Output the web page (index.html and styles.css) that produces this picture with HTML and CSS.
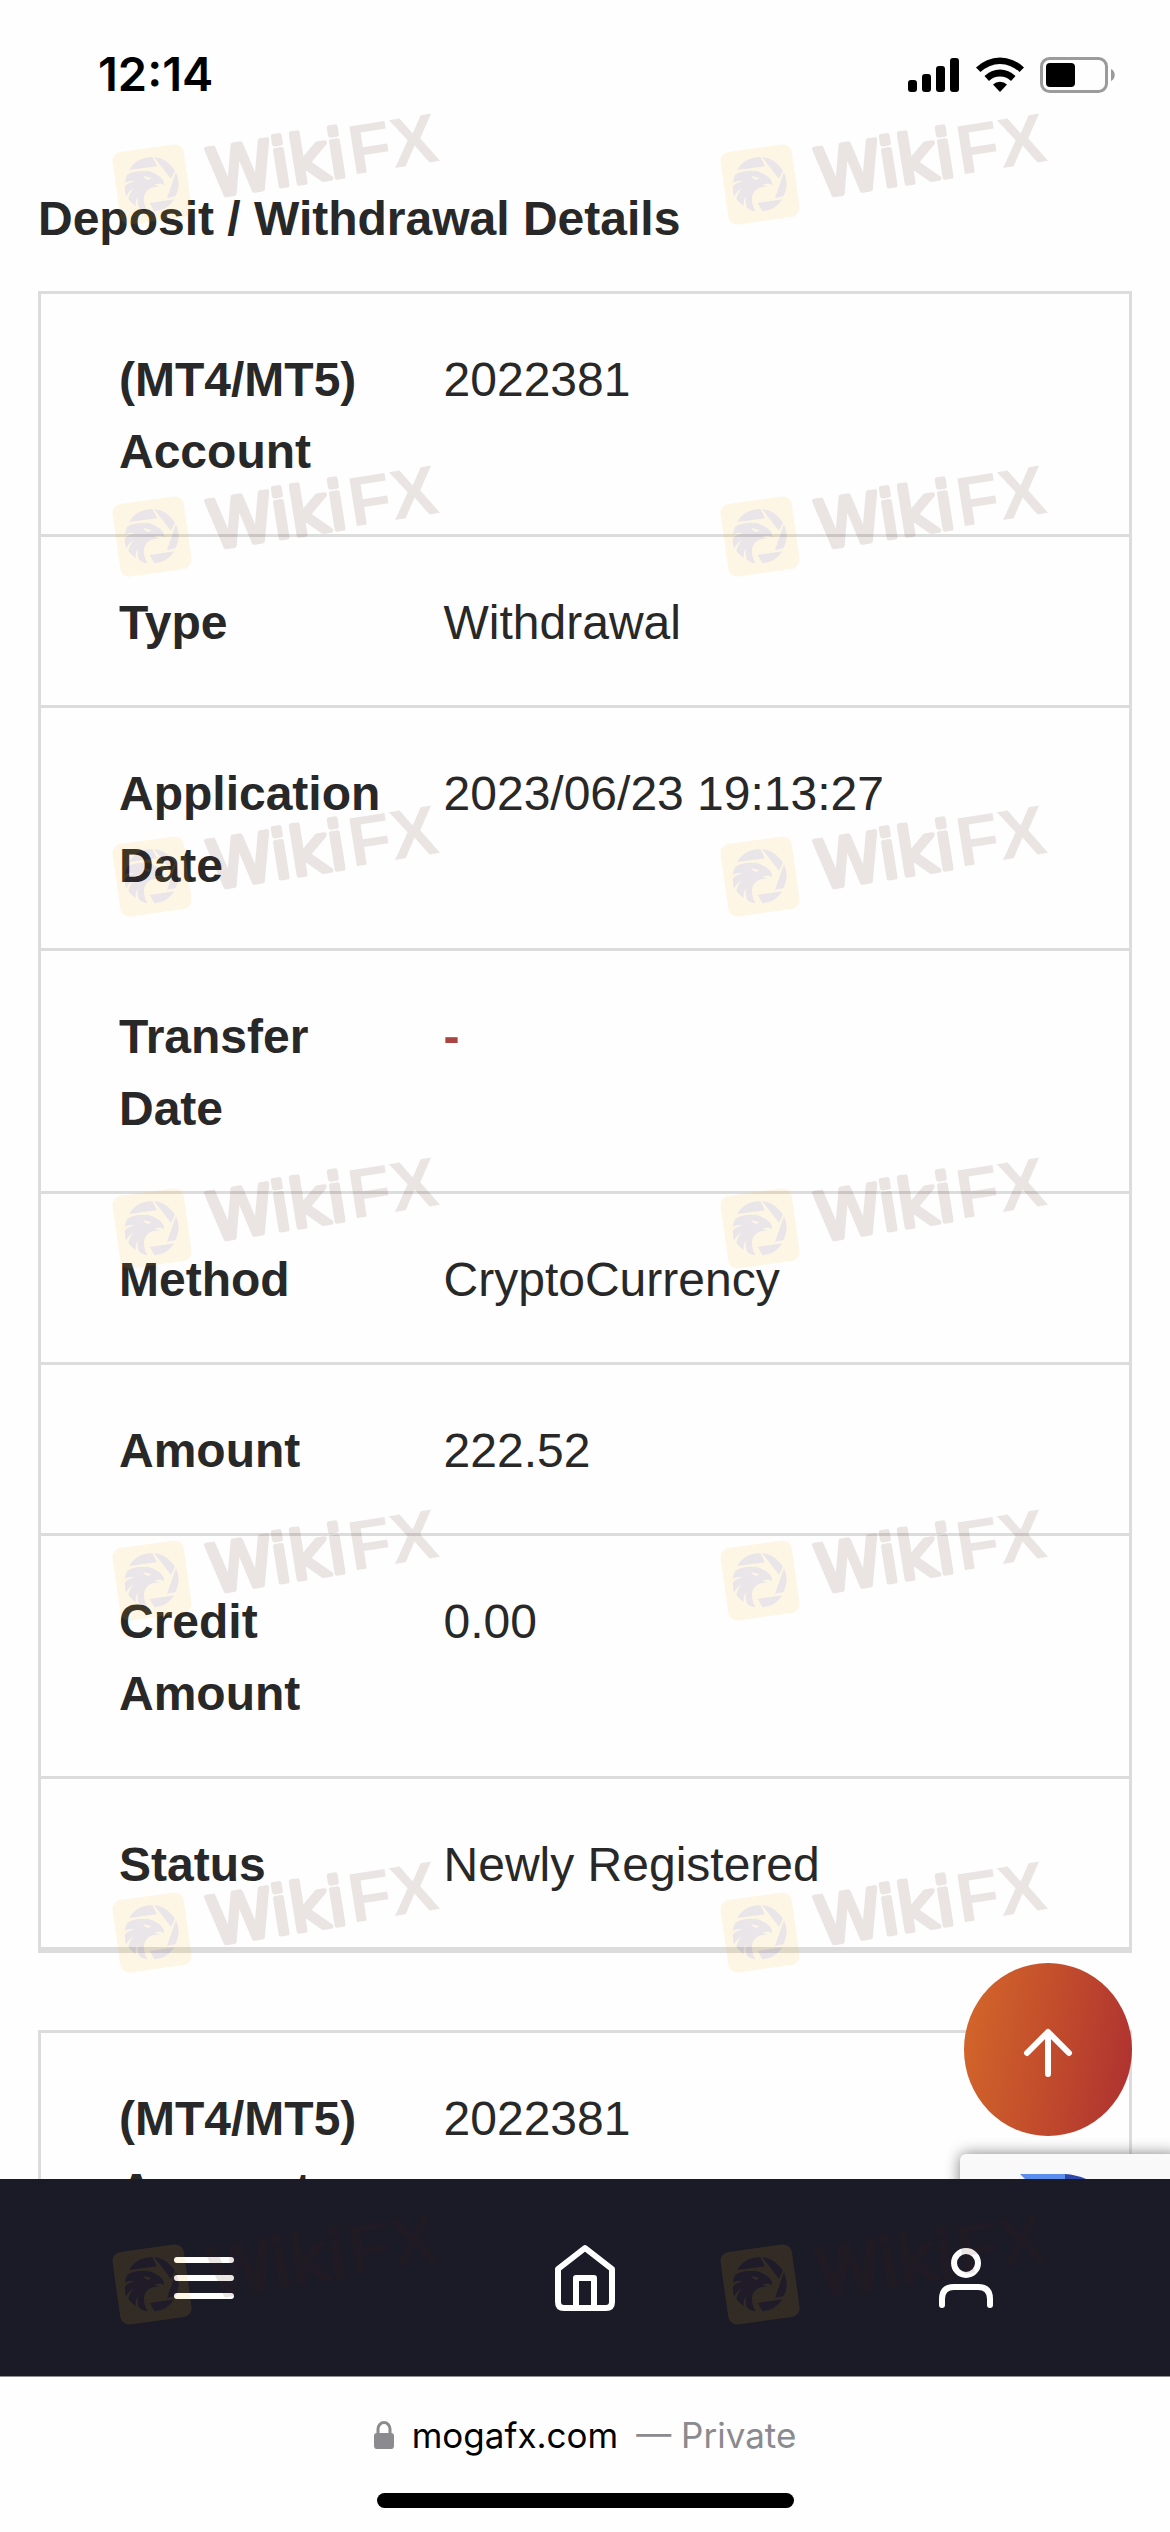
FILE: index.html
```html
<!DOCTYPE html>
<html lang="en">
<head>
	<meta charset="UTF-8">
	<meta name="viewport" content="width=device-width, initial-scale=1">
	<title>Deposit / Withdrawal Details</title>
	<link rel="stylesheet" href="styles.css">
</head>
<body>

	<div class="statusbar">
		<span class="time">12:14</span>
		<div class="signals">
			<svg width="52" height="40" viewBox="0 0 52 40">
				<rect x="0" y="26" width="9" height="12" rx="3"/>
				<rect x="14" y="20" width="9" height="18" rx="3"/>
				<rect x="28" y="12" width="9" height="26" rx="3"/>
				<rect x="42" y="4" width="9" height="34" rx="3"/>
			</svg>
			<svg width="50" height="40" viewBox="0 0 50 40">
				<path d="M1 13.500A34 34 0 0 1 49 13.500L44.500 18A28 28 0 0 0 5.500 18Z"/>
				<path d="M9.500 22A22 22 0 0 1 40.500 22L36 27A16 16 0 0 0 14 27Z"/>
				<path d="M18 30.500A10 10 0 0 1 32 30.500L25 38Z"/>
			</svg>
			<svg width="76" height="40" viewBox="0 0 76 40">
				<rect x="1.500" y="4.500" width="65" height="33" rx="8" fill="none" stroke="#9b9b9b" stroke-width="3"/>
				<rect x="6" y="9" width="29" height="24" rx="4"/>
				<path d="M71 15C76 17 76 25 71 27Z" fill="#9b9b9b"/>
			</svg>
		</div>
	</div>

	<div class="page">
		<h1>Deposit / Withdrawal Details</h1>

		<div class="card">
			<table>
				<tr><th scope="row">(MT4/MT5) Account</th><td>2022381</td></tr>
				<tr><th scope="row">Type</th><td>Withdrawal</td></tr>
				<tr><th scope="row">Application Date</th><td>2023/06/23 19:13:27</td></tr>
				<tr><th scope="row">Transfer Date</th><td class="red">-</td></tr>
				<tr><th scope="row">Method</th><td>CryptoCurrency</td></tr>
				<tr><th scope="row">Amount</th><td>222.52</td></tr>
				<tr><th scope="row">Credit Amount</th><td>0.00</td></tr>
				<tr><th scope="row">Status</th><td>Newly Registered</td></tr>
			</table>
		</div>

		<div class="card">
			<table>
				<tr><th scope="row">(MT4/MT5) Account</th><td>2022381</td></tr>
			</table>
		</div>

		<button class="to-top" type="button" aria-label="Back to top">
			<svg width="54" height="54" viewBox="0 0 54 54">
				<path d="M27 6V48M6 27L27 6L48 27"/>
			</svg>
		</button>

		<div class="captcha">
			<svg width="72" height="60" viewBox="0 0 72 60">
				<path d="M0 0H45V45Z" fill="#5c8eee"/>
				<path d="M45 0Q60 1 72 8V50H45Z" fill="#2d48a6"/>
			</svg>
		</div>
	</div>

	<nav class="tabs">
		<button type="button" aria-label="Menu">
			<svg width="72" height="72" viewBox="0 0 72 72">
				<path d="M9 18H63M9 36H63M9 54H63"/>
			</svg>
		</button>
		<a href="#" aria-label="Home">
			<svg width="72" height="72" viewBox="0 0 72 72">
				<path d="M9 27L36 6L63 27V60Q63 66 57 66H15Q9 66 9 60ZM27 66V36H45V66"/>
			</svg>
		</a>
		<a href="#" aria-label="Account">
			<svg width="72" height="72" viewBox="0 0 72 72">
				<circle cx="36" cy="21" r="12"/>
				<path d="M12 63V57Q12 45 24 45H48Q60 45 60 57V63"/>
			</svg>
		</a>
	</nav>

	<div class="browser">
		<button class="address" type="button">
			<svg width="20" height="28" viewBox="0 0 20 28">
				<path d="M4 13V8A6 6.500 0 0 1 16 8V13" fill="none" stroke="#8a8a8f" stroke-width="3"/>
				<rect y="12" width="20" height="16" rx="3" fill="#8a8a8f"/>
			</svg>
			<span>mogafx.com</span>
			<span class="private">— Private</span>
		</button>
		<div class="home-bar"></div>
	</div>

	<div class="marks" aria-hidden="true">
		<svg viewBox="0 0 360 140">
			<g id="mark">
				<rect x="16" y="50" width="72" height="73" rx="9" fill="#f9b91e" transform="rotate(-8 52 86)"/>
				<g transform="scale(.3333)" fill="#4b1c40">
					<path d="M88 216Q108 178 157 177L171 205Z"/>
					<path d="M162 177Q201 181 225 218L213 243Z"/>
					<path d="M228 222Q245 261 227 294L201 300Z"/>
					<path d="M223 304Q201 339 163 340L149 315Z"/>
					<path d="M82 230C100 218 144 214 160 224C178 234 190 238 193 262C186 256 176 256 163 259L180 267C150 263 132 281 132 303C132 320 138 332 143 340C133 339 126 336 118 330C112 318 111 306 116 294C108 304 105 314 108 324C98 318 90 309 85 302C87 290 93 280 103 271C91 276 83 285 79 296C74 284 74 272 75 264C84 256 93 252 104 250C93 248 85 249 75 254C76 246 78 238 82 230Z"/>
					<path d="M130 234L153 240C150 248 136 247 130 234Z" fill="#f9b91e"/>
				</g>
				<g class="mark-text" transform="rotate(-9 112 99)">
					<text class="round" x="112" y="99">Wiki</text>
					<text x="254" y="99">FX</text>
				</g>
			</g>
		</svg>
		<svg viewBox="0 0 360 140"><use href="#mark"/></svg>
		<svg viewBox="0 0 360 140"><use href="#mark"/></svg>
		<svg viewBox="0 0 360 140"><use href="#mark"/></svg>
		<svg viewBox="0 0 360 140"><use href="#mark"/></svg>
		<svg viewBox="0 0 360 140"><use href="#mark"/></svg>
		<svg viewBox="0 0 360 140"><use href="#mark"/></svg>
		<svg viewBox="0 0 360 140"><use href="#mark"/></svg>
		<svg viewBox="0 0 360 140"><use href="#mark"/></svg>
		<svg viewBox="0 0 360 140"><use href="#mark"/></svg>
		<svg viewBox="0 0 360 140"><use href="#mark"/></svg>
		<svg viewBox="0 0 360 140"><use href="#mark"/></svg>
		<svg viewBox="0 0 360 140"><use href="#mark"/></svg>
		<svg viewBox="0 0 360 140"><use href="#mark"/></svg>
	</div>

</body>
</html>
```
FILE: styles.css
```css
* {padding: 0; margin: 0; box-sizing: border-box;}
body {display: flex; flex-direction: column; height: 100vh; overflow: hidden; background: #fefefe; color: #282828; font: 48px/72px "Liberation Sans", Arial, sans-serif;}
svg {display: block;}
button {border: 0; background: none; font: inherit; color: inherit;}

/* status bar */
.statusbar {display: flex; justify-content: space-between; align-items: center; padding: 44px 54px 36px 98px; color: #000;}
.time {font: 600 47px/60px Inter, sans-serif;}
.signals {display: flex; gap: 15px;}

/* page */
.page {position: relative; flex: 1; min-height: 0; overflow: hidden; padding: 43px 38px 0;}
h1 {margin-bottom: 36px; font-size: 48px; line-height: 72px;}
.card {margin-bottom: 77px; border: 3px solid #dcdcdc;}
.card table {width: 100%; border-spacing: 0;}
.card th, .card td {border-bottom: 3px solid #dcdcdc; text-align: left; vertical-align: top;}
.card th {width: 37%; padding: 50px 54px 46px 78px;}
.card td {padding: 50px 30px 46px 0;}
.card .red {color: #a94442; font-weight: bold;}

.to-top {position: absolute; right: 38px; bottom: 43px; display: flex; align-items: center; justify-content: center; width: 168px; height: 173px; padding-top: 6px; border-radius: 50%; background: linear-gradient(100deg, #d4682a, #c04a2c 55%, #ac3031); z-index: 2;}
.to-top svg {fill: none; stroke: #fff; stroke-width: 6; stroke-linecap: round; stroke-linejoin: round;}
.captcha {position: absolute; right: -10px; bottom: -155px; width: 220px; height: 180px; padding: 20px 60px; border-radius: 6px; background: #f9f9f9; box-shadow: 0 0 15px #808080;}

/* bottom menu */
.tabs {display: grid; grid-template-columns: repeat(3, 1fr); align-items: center; height: 198px; padding: 0 14px; border-bottom: 1px solid #8f8f94; background: #1a1b27;}
.tabs button, .tabs a {display: flex; justify-content: center;}
.tabs svg {fill: none; stroke: #fff; stroke-width: 6; stroke-linecap: round; stroke-linejoin: round;}

/* browser bar */
.browser {display: flex; flex-direction: column; align-items: center; justify-content: space-between; height: 155px; padding: 34px 0 24px; color: #000;}
.address {display: flex; align-items: center; gap: 18px; font: 35px/48px Inter, sans-serif;}
.address .private {color: #8a8a8f;}
.home-bar {width: 417px; height: 15px; border-radius: 8px; background: #000;}

/* watermark */
.marks {position: fixed; top: 0; right: 0; bottom: 0; left: 0; display: grid; grid-template-columns: repeat(2, 608px); grid-template-rows: 352px 340px repeat(5, 352px); padding: 98px 0 0 100px; overflow: hidden; opacity: .11; pointer-events: none; z-index: 10;}
.marks svg {width: 360px; height: 140px;}
.mark-text {fill: #4b140a; font: bold 70px "Liberation Sans", Arial, sans-serif;}
.mark-text .round {font: 66px "DejaVu Sans", sans-serif; stroke: #4b140a; stroke-width: 5; stroke-linejoin: round;}
```
